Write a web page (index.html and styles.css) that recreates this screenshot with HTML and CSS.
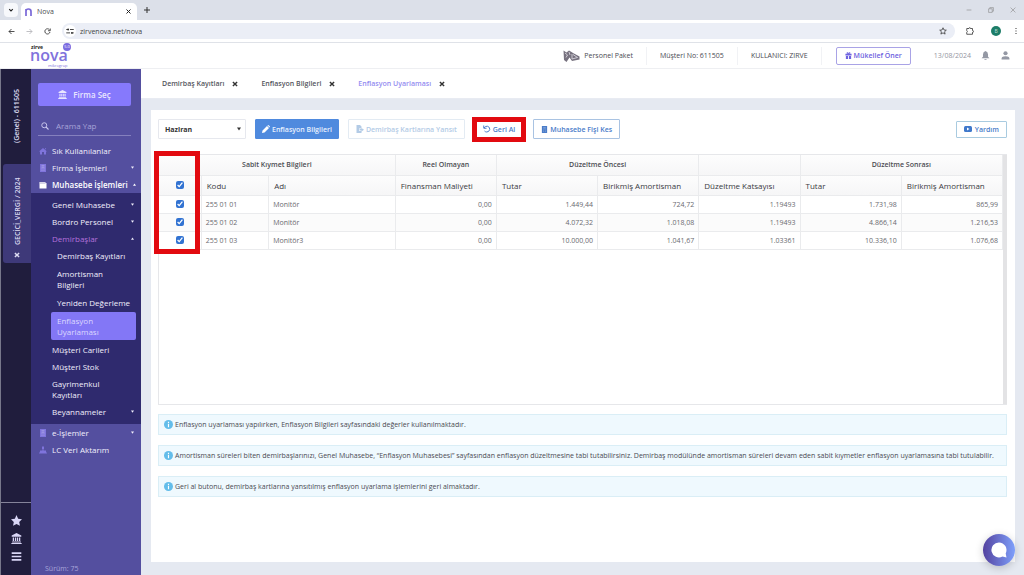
FILE: index.html
```html
<!DOCTYPE html>
<html lang="tr">
<head>
<meta charset="utf-8">
<title>Nova</title>
<link rel="stylesheet" href="styles.css">
</head>
<body>
<svg class="defs" aria-hidden="true">
  <symbol id="bank" viewBox="0 0 16 16"><path fill="currentColor" d="M8 0 15 3.6V5.4H1V3.6zM2.5 6.5h2v5h-2zM5.8 6.5h1.7v5H5.8zM8.6 6.5h1.7v5H8.600zM11.500 6.500h2v5h-2zM1.600 12.300h12.800v1.400H1.600zM.5 14.400h15V16H.5z"/></symbol>
  <symbol id="cross" viewBox="0 0 10 10"><path d="M1.500 1.500 8.500 8.500M8.500 1.500 1.500 8.500" stroke="currentColor" stroke-width="2.400" fill="none"/></symbol>
  <symbol id="down" viewBox="0 0 8 8"><path fill="currentColor" d="M0 1h8L4 7z"/></symbol>
  <symbol id="up" viewBox="0 0 8 8"><path fill="currentColor" d="M0 7h8L4 1z"/></symbol>
  <symbol id="info" viewBox="0 0 20 20"><circle cx="10" cy="10" r="10" fill="#63bdea"/><path d="M10 4v2.500M10 8.500V16" stroke="#fff" stroke-width="2.600"/></symbol>
  <symbol id="book" viewBox="0 0 16 16"><path fill="currentColor" d="M2 0h12v16H2z"/><path d="M5 3.500h6M5 6.500h6M5 9.500h2M9 9.500h2M5 12.500h2M9 12.500h2" stroke="#fff" stroke-opacity=".45" stroke-width="1.300"/></symbol>
</svg>

<header class="browser">
  <div class="tabstrip">
    <button class="tab-search" aria-label="Sekme ara"><svg viewBox="0 0 10 10"><path d="M2 3.500 5 6.500 8 3.500" fill="none" stroke="#222" stroke-width="1.800"/></svg></button>
    <div class="browser-tab">
      <svg class="favicon" viewBox="0 0 14 16"><path d="M2 16V2M2 6Q2 2 7 2t5 5v9" fill="none" stroke="#7a68d8" stroke-width="3.400"/></svg>
      <span class="grow">Nova</span>
      <button class="plain" aria-label="Kapat"><svg class="i5" viewBox="0 0 10 10"><path d="M1 1 9 9M9 1 1 9" stroke="#222" stroke-width="2"/></svg></button>
    </div>
    <button class="plain" aria-label="Yeni sekme"><svg class="i6" viewBox="0 0 10 10"><path d="M5 0V10M0 5H10" stroke="#333" stroke-width="1.700"/></svg></button>
    <div class="window-controls">
      <svg class="i6" viewBox="0 0 10 10"><path d="M1 5H9" stroke="#888"/></svg>
      <svg class="i6" viewBox="0 0 10 10"><path d="M1 3H7V9H1zM3 3V1H9V7H7" fill="none" stroke="#888"/></svg>
      <svg class="i6" viewBox="0 0 10 10"><path d="M1 1 9 9M9 1 1 9" stroke="#888"/></svg>
    </div>
  </div>
  <div class="toolbar">
    <button class="plain" aria-label="Geri"><svg class="i7" viewBox="0 0 14 14"><path d="M13 7H2M7 2 2 7 7 12" fill="none" stroke="#333" stroke-width="1.700"/></svg></button>
    <button class="plain" aria-label="İleri"><svg class="i7" viewBox="0 0 14 14"><path d="M1 7H12M7 2 12 7 7 12" fill="none" stroke="#b5b5b9" stroke-width="1.700"/></svg></button>
    <button class="plain" aria-label="Yenile"><svg class="i7" viewBox="0 0 14 14"><path d="M12 8A5.200 5.200 0 1 1 11 3.500M12.500 1V5.500H8" fill="none" stroke="#333" stroke-width="1.700"/></svg></button>
    <div class="address">
      <svg class="site" viewBox="0 0 16 16"><circle cx="8" cy="8" r="8" fill="#fff"/><path d="M3 6H5.500M8 6H13M3 10.500H8M10.500 10.500H13" stroke="#333" stroke-width="1.200"/><circle cx="5.500" cy="6" r="1.300" fill="#333"/><circle cx="10.500" cy="10.500" r="1.300" fill="#333"/></svg>
      <input class="url" aria-label="Adres" value="zirvenova.net/nova">
      <svg class="i8" viewBox="0 0 16 16"><path d="M8 1.500 10 6l4.600.4-3.500 3.100 1.100 4.700L8 11.700l-4.200 2.500 1.100-4.700L1.400 6.400 6 6z" fill="none" stroke="#333" stroke-width="1.500"/></svg>
    </div>
    <svg class="i8 ext" viewBox="0 0 16 16"><path d="M1.500 3H6Q6.500 .5 8 1.500 9 1.500 9 3H13V7Q15.500 7.500 15.500 9T13 10.500V14.500H1.500V10.500Q4 9 1.500 7.500z" fill="none" stroke="#333" stroke-width="1.600"/></svg>
    <span class="avatar">B</span>
    <svg class="i8" viewBox="0 0 16 16"><path d="M7 2h2v2H7zM7 7h2v2H7zM7 12h2v2H7z" fill="#333"/></svg>
  </div>
</header>

<div class="topbar">
  <a class="logo" href="#" aria-label="zirve nova"><span class="zirve">zirve</span><span class="nova">nova</span><span class="badge">5.0</span><span class="by">mikrogrup</span></a>
  <div class="account">
    <span class="paket"><svg viewBox="0 0 34 24"><path d="M1 1 7 5 12 1 17 4 20 6 33 13 33 19 18 22 13 15 7 24 2 20z" fill="#77727f"/><path d="M4 6 9 10 6 15M12 4 14 10M18 8 18 18 29 15 20 9" stroke="#e3e1e8" stroke-width="1.600" fill="none"/></svg>Personel Paket</span>
    <span class="musteri">Müşteri No: 611505</span>
    <span class="user">KULLANICI: ZIRVE</span>
    <span class="oner"><button class="oner-btn"><svg class="i7" viewBox="0 0 16 16"><path fill="currentColor" d="M1 4h14v4H1zM2 9h5v7H2zM9 9h5v7H9z"/><path d="M8 4Q3 4 4.500 1.500T8 4Q13 4 11.500 1.500T8 4" fill="none" stroke="currentColor" stroke-width="1.700"/></svg>Mükellef Öner</button></span>
    <span class="date">13/08/2024</span>
    <svg class="i9" viewBox="0 0 16 16"><path d="M8 0Q12.500 1.500 12.500 6V10L15 13H1L3.500 10V6Q3.500 1.500 8 0zM5.500 14H10.500Q8 17.500 5.500 14" fill="#9498a4"/></svg>
    <svg class="i9 person" viewBox="0 0 16 16"><circle cx="8" cy="4" r="3.700" fill="#9498a4"/><path d="M1 15Q0 9.500 8 9.500T15 15z" fill="#9498a4"/></svg>
  </div>
</div>

<div class="app">
  <aside class="rail">
    <button class="firm">(Genel) - 611505</button>
    <button class="firm current"><svg class="i6"><use href="#cross"/></svg>GECİCİ_VERGİ / 2024</button>
    <div class="rail-bottom">
      <svg viewBox="0 0 16 16"><path fill="#d9d6f6" d="M8 0 10.400 5.300 16 6 11.900 10 13 15.800 8 13 3 15.800 4.100 10 0 6 5.600 5.300z"/></svg>
      <svg><use href="#bank"/></svg>
      <svg viewBox="0 0 16 16"><path stroke="#d9d6f6" stroke-width="2.400" d="M1 3H15M1 8H15M1 13H15"/></svg>
    </div>
  </aside>

  <nav class="sidebar">
    <button class="firma-sec"><svg><use href="#bank"/></svg>Firma Seç</button>
    <label class="search"><svg viewBox="0 0 16 16"><circle cx="6.500" cy="6.500" r="5" fill="none" stroke="#cbc8ef" stroke-width="1.900"/><path d="M10 10 15 15" stroke="#cbc8ef" stroke-width="2.200"/></svg><input placeholder="Arama Yap" aria-label="Arama Yap"></label>
    <a class="item top" href="#"><svg class="mi" viewBox="0 0 16 16"><path fill="currentColor" d="M8 2 16 9H14V15H10V10H6V15H2V9H0zM12 2h2v4z"/></svg>Sık Kullanılanlar</a>
    <a class="item top" href="#"><svg class="mi"><use href="#book"/></svg>Firma İşlemleri<svg class="caret"><use href="#down"/></svg></a>
    <a class="item top open" href="#"><svg class="mi" viewBox="0 0 16 16"><path fill="currentColor" d="M1 2H13V4H15V15H1z"/><path d="M2 4H13" stroke="#544f9f"/></svg>Muhasebe İşlemleri<svg class="caret"><use href="#up"/></svg></a>
    <div class="submenu">
      <a class="item" href="#">Genel Muhasebe<svg class="caret"><use href="#down"/></svg></a>
      <a class="item" href="#">Bordro Personel<svg class="caret"><use href="#down"/></svg></a>
      <a class="item pink" href="#">Demirbaşlar<svg class="caret"><use href="#up"/></svg></a>
      <div class="leafs">
        <a class="leaf" href="#">Demirbaş Kayıtları</a>
        <a class="leaf" href="#">Amortisman<br>Bilgileri</a>
        <a class="leaf" href="#">Yeniden Değerleme</a>
        <a class="leaf active" href="#">Enflasyon<br>Uyarlaması</a>
      </div>
      <a class="item" href="#">Müşteri Carileri</a>
      <a class="item" href="#">Müşteri Stok</a>
      <a class="item" href="#">Gayrimenkul<br>Kayıtları</a>
      <a class="item" href="#">Beyannameler<svg class="caret"><use href="#down"/></svg></a>
    </div>
    <a class="item top" href="#"><svg class="mi"><use href="#book"/></svg>e-İşlemler<svg class="caret"><use href="#down"/></svg></a>
    <a class="item top" href="#"><svg class="mi" viewBox="0 0 16 16"><path fill="currentColor" d="M6 1H10V6H9V9H14V11L16 15H0L2 11V9H7V6H6z"/></svg>LC Veri Aktarım</a>
    <span class="version">Sürüm: 75</span>
  </nav>

  <main class="main">
    <div class="page-tabs">
      <span class="page-tab">Demirbaş Kayıtları<button class="plain" aria-label="Kapat"><svg class="i6"><use href="#cross"/></svg></button></span>
      <span class="page-tab">Enflasyon Bilgileri<button class="plain" aria-label="Kapat"><svg class="i6"><use href="#cross"/></svg></button></span>
      <span class="page-tab"><span class="violet">Enflasyon Uyarlaması</span><button class="plain" aria-label="Kapat"><svg class="i6"><use href="#cross"/></svg></button></span>
    </div>
    <div class="content">
      <section class="card">
        <div class="actions">
          <div class="month"><select aria-label="Dönem"><option>Haziran</option></select><svg class="caret"><use href="#down"/></svg></div>
          <button class="btn primary"><svg class="i8" viewBox="0 0 16 16"><path fill="#fff" d="M0 16 1 11 10 2 14 6 5 15zM11 1 12 0Q14 0 16 3L15 5z"/></svg>Enflasyon Bilgileri</button>
          <button class="btn faded" disabled><svg class="i8" viewBox="0 0 16 16"><path fill="currentColor" d="M1 0H8L11 3V7H6V12H11V16H1zM11 6 16 9.500 11 13V11H7V8H11z"/></svg>Demirbaş Kartlarına Yansıt</button>
          <span class="marked"><button class="btn undo"><svg class="i8" viewBox="0 0 16 16"><path d="M1.500 1V6.500H7M2 6Q5 1.500 9 2.500 14 4 13.500 9 12 14 7.500 14 5 14 3 12" fill="none" stroke="currentColor" stroke-width="2"/></svg>Geri Al</button></span>
          <button class="btn"><svg class="i7"><use href="#book"/></svg>Muhasebe Fişi Kes</button>
          <button class="btn help"><svg class="i8" viewBox="0 0 16 16"><rect y="2" width="16" height="12" rx="3" fill="#3f78cb"/><path d="M6 5 11 8 6 11z" fill="#fff"/></svg>Yardım</button>
        </div>
        <div class="grid-wrap">
          <div class="grid-body">
            <table class="grid">
              <colgroup><col class="c-check"><col class="c-code"><col class="c-name"><col class="c-num"><col class="c-num"><col class="c-num"><col class="c-num"><col class="c-num"><col class="c-num"></colgroup>
              <thead>
                <tr class="groups"><th colspan="3">Sabit Kıymet Bilgileri</th><th>Reel Olmayan</th><th colspan="2">Düzeltme Öncesi</th><th></th><th colspan="2">Düzeltme Sonrası</th></tr>
                <tr class="cols"><th class="check"><input type="checkbox" checked aria-label="Tümünü seç"></th><th>Kodu</th><th>Adı</th><th>Finansman Maliyeti</th><th>Tutar</th><th>Birikmiş Amortisman</th><th>Düzeltme Katsayısı</th><th>Tutar</th><th>Birikmiş Amortisman</th></tr>
              </thead>
              <tbody>
                <tr><td class="check"><input type="checkbox" checked aria-label="255 01 01"></td><td>255 01 01</td><td>Monitör</td><td class="num">0,00</td><td class="num">1.449,44</td><td class="num">724,72</td><td class="num">1.19493</td><td class="num">1.731,98</td><td class="num">865,99</td></tr>
                <tr><td class="check"><input type="checkbox" checked aria-label="255 01 02"></td><td>255 01 02</td><td>Monitör</td><td class="num">0,00</td><td class="num">4.072,32</td><td class="num">1.018,08</td><td class="num">1.19493</td><td class="num">4.866,14</td><td class="num">1.216,53</td></tr>
                <tr><td class="check"><input type="checkbox" checked aria-label="255 01 03"></td><td>255 01 03</td><td>Monitör3</td><td class="num">0,00</td><td class="num">10.000,00</td><td class="num">1.041,67</td><td class="num">1.03361</td><td class="num">10.336,10</td><td class="num">1.076,68</td></tr>
              </tbody>
            </table>
            <div class="mark"></div>
          </div>
          <div class="scrollbar"></div>
        </div>
        <div class="notes">
          <p class="note"><svg><use href="#info"/></svg>Enflasyon uyarlaması yapılırken, Enflasyon Bilgileri sayfasındaki değerler kullanılmaktadır.</p>
          <p class="note"><svg><use href="#info"/></svg>Amortisman süreleri biten demirbaşlarınızı, Genel Muhasebe, “Enflasyon Muhasebesi” sayfasından enflasyon düzeltmesine tabi tutabilirsiniz. Demirbaş modülünde amortisman süreleri devam eden sabit kıymetler enflasyon uyarlamasına tabi tutulabilir.</p>
          <p class="note"><svg><use href="#info"/></svg>Geri al butonu, demirbaş kartlarına yansıtılmış enflasyon uyarlama işlemlerini geri almaktadır.</p>
        </div>
      </section>
    </div>
  </main>
</div>
<button class="chat" aria-label="Canlı destek"><svg viewBox="0 0 16 16"><path fill="#fff" d="M8 .5A7.500 7.500 0 0 1 14.700 11.400L15.500 15.500 11.500 14.600A7.500 7.500 0 1 1 8 .5z"/></svg></button>
</body>
</html>
```
FILE: styles.css
```css
* { box-sizing: border-box; }
body { margin: 0; min-height: 100vh; display: flex; flex-direction: column; font: 7px/11px "Open Sans", "Noto Sans", sans-serif; color: #4a4a52; background: #fff; }
button, input, select { font: inherit; color: inherit; }
button { cursor: pointer; }
a { color: inherit; text-decoration: none; }
svg { flex: none; display: block; }
.defs { position: absolute; width: 0; height: 0; }
.plain { border: 0; padding: 0; background: none; }
.grow { flex: 1; }
.i5 { width: 5px; height: 5px; }
.i6 { width: 6px; height: 6px; }
.i7 { width: 7px; height: 7px; }
.i8 { width: 8px; height: 8px; }
.i9 { width: 9px; height: 9px; }

/* Browser frame */
.tabstrip { height: 20px; display: flex; align-items: center; gap: 7px; padding-left: 4px; background: #dce0e9; }
.tab-search { width: 14px; height: 14px; padding: 4px; border: 0; border-radius: 4px; background: #f7f8fb; }
.tab-search svg { width: 6px; height: 6px; }
.browser-tab { width: 116px; height: 17px; align-self: flex-end; margin-left: -4px; padding: 0 6px 0 4px; display: flex; align-items: center; gap: 5px; background: #fff; border-radius: 5px 5px 0 0; }
.favicon { width: 7px; height: 8px; }
.window-controls { display: flex; gap: 16px; margin: 0 8px 0 auto; }
.toolbar { height: 23px; display: flex; align-items: center; gap: 11px; padding: 0 4px 0 8px; border-bottom: 1px solid #dfe2e8; }
.address { flex: 1; height: 16px; display: flex; align-items: center; gap: 4px; padding: 0 8px 0 2px; border-radius: 8px; background: #ebeef6; }
.site { width: 12px; height: 12px; }
.url { flex: 1; min-width: 0; border: 0; padding: 0; background: none; color: #444; }
.ext { margin-right: 6px; }
.avatar { width: 10px; height: 10px; border-radius: 50%; background: #1d7d68; color: #b9ded5; font-size: 5px; line-height: 10px; text-align: center; }

/* Product header */
.topbar { height: 26px; display: flex; align-items: center; justify-content: space-between; border-bottom: 1px solid #eeeff2; }
.logo { position: relative; width: 44px; height: 26px; margin-left: 30px; color: #8072dc; }
.zirve, .nova, .badge, .by { position: absolute; }
.zirve { left: 1px; top: 1px; font: bold 5px/6px "Open Sans", sans-serif; color: #222; }
.nova { left: 0; top: 8px; font: 600 16px/9px "Open Sans", sans-serif; }
.badge { left: 33px; top: 0; width: 8px; height: 8px; border-radius: 50%; background: #7b6be0; color: #fff; font-size: 4px; line-height: 8px; text-align: center; }
.by { left: 18px; top: 20px; font-size: 4px; line-height: 5px; }
.account { display: flex; align-items: center; padding-right: 14px; }
.account > span { height: 18px; display: flex; align-items: center; }
.paket { gap: 4px; padding-right: 13px; border-right: 1px solid #f1f2f5; }
.paket svg { width: 17px; height: 12px; }
.musteri, .user { padding: 0 13px; border-right: 1px solid #f1f2f5; }
.oner { padding: 0 23px 0 14px; }
.oner-btn { height: 18px; display: flex; align-items: center; gap: 2px; padding: 0 8px; border: 1px solid #a9a3e6; border-radius: 2px; background: #fff; color: #6d62e0; font-weight: 600; }
.date { color: #94969f; margin-right: 10px; }
.person { margin-left: 11px; }

/* Application */
.app { flex: 1; display: flex; }
.rail { width: 31px; flex: none; display: flex; flex-direction: column; align-items: stretch; background: #201d3d; border-left: 1px solid #77778a; color: #dedcf3; }
.firm { writing-mode: vertical-rl; transform: rotate(180deg); height: 95px; border: 0; background: none; display: flex; align-items: center; justify-content: center; gap: 7px; padding: 0; font-weight: 600; }
.firm.current { height: 99px; margin-left: 2px; justify-content: flex-start; padding: 5px 0; background: #3e3979; border-radius: 0 3px 3px 0; }
.rail-bottom { margin-top: auto; height: 73px; border-top: 1px solid #85839a; display: flex; flex-direction: column; align-items: center; gap: 7px; padding-top: 12px; color: #d9d6f6; }
.rail-bottom svg { width: 11px; height: 11px; }
.sidebar { width: 110px; flex: none; display: flex; flex-direction: column; background: #544f9f; color: #f1effc; font-size: 8px; font-weight: 500; }
.firma-sec { height: 23px; margin: 14px 10px 0 7px; border: 0; border-radius: 2px; background: #8679fc; color: #e9e6ff; display: flex; align-items: center; justify-content: center; gap: 6px; font-weight: 600; }
.firma-sec svg { width: 9px; height: 9px; }
.search { margin: 10px 10px 6px 7px; height: 20px; display: flex; align-items: center; gap: 7px; padding-left: 3px; border-bottom: 1px solid #8580be; }
.search svg { width: 8px; height: 8px; }
.search input { flex: 1; min-width: 0; border: 0; padding: 0; background: none; font-weight: 400; }
.search input::placeholder { color: #a8a4d8; }
.item { display: flex; align-items: center; gap: 5px; padding: 3px 6px 3px 21px; white-space: nowrap; }
.item.top { padding-left: 8px; }
.mi { width: 8px; height: 8px; color: #7f74dc; }
.open { font-weight: 600; color: #fff; }
.open .mi { color: #fff; }
.caret { width: 4px; height: 4px; margin-left: auto; }
.sidebar .caret { width: 3px; height: 3px; margin-right: 1px; }
.submenu { background: #2f2a6e; padding: 3px 0 4px; }
.pink { color: #b571dc; }
.pink .caret { color: #eceafa; }
.leafs { display: flex; flex-direction: column; gap: 1px; padding-bottom: 1px; }
.leaf { margin: 0 5px 0 20px; padding: 3px 0 3px 6px; border-radius: 2px; white-space: nowrap; }
.active { background: #8377f6; color: #dcd8ff; }
.version { margin: auto 0 1px 14px; color: #a9a5da; font-size: 7px; font-weight: 400; }
.main { flex: 1; min-width: 0; display: flex; flex-direction: column; }
.page-tabs { height: 30px; display: flex; align-items: center; gap: 23px; padding-left: 21px; border-bottom: 1px solid #e8ebf2; }
.page-tab { display: flex; align-items: center; gap: 8px; color: #55555d; font-weight: 600; }
.page-tab button { color: #333; }
.violet { color: #948cf0; }
.content { flex: 1; display: flex; padding: 11px 9px 13px 10px; background: #e5e9f1; }
.card { flex: 1; min-width: 0; display: flex; flex-direction: column; background: #fff; padding: 9px 8px 0 7px; }
.actions { display: flex; align-items: center; gap: 9px; }
.month { position: relative; width: 88px; height: 20px; }
.month select { width: 100%; height: 20px; appearance: none; border: 1px solid #e6e8ee; border-radius: 1px; background: #fff; padding: 0 6px; font-weight: 700; color: #333; }
.month .caret { position: absolute; right: 5px; top: 8px; color: #333; }
.btn { height: 20px; display: flex; align-items: center; gap: 2px; padding: 0 7px; border: 1px solid #a9c3e2; border-radius: 1px; background: #fff; color: #4a7cc9; font-weight: 600; white-space: nowrap; }
.primary { padding: 0 6px; background: #4f8ade; border-color: #4f8ade; color: #e8f1ff; }
.faded { border-color: #e3ebf3; color: #b3cbe6; }
.marked { margin: -3px -2px; border: 5px solid #e20a10; }
.undo { height: 15px; padding: 0 6px; border: 0; }
.help { margin-left: auto; height: 17px; border-color: #a9cbe0; gap: 3px; }
.grid-wrap { height: 251px; margin-top: 15px; display: flex; border: 1px solid #e6e7ea; border-right: 0; }
.grid-body { position: relative; flex: 1; min-width: 0; }
.scrollbar { width: 4px; background: #e3e3e5; }
.grid { width: 100%; table-layout: fixed; border-collapse: collapse; }
.c-check { width: 5%; }
.c-code { width: 8%; }
.c-name { width: 15%; }
.c-num { width: 12%; }
.grid th, .grid td { padding: 0 5px; border-right: 1px solid #eaebed; border-bottom: 1px solid #eaebed; white-space: nowrap; }
.grid thead tr { height: 20px; background: linear-gradient(#fdfdfd, #f6f6f7); }
.grid th { font-weight: 600; color: #4c4c52; text-align: center; }
.grid .cols th { font-size: 8px; font-weight: 500; color: #3a3a3f; text-align: left; }
.grid tbody tr { height: 18px; }
.grid tbody tr:nth-child(even) { background: #fbfbfb; }
.grid td { color: #6a6a70; padding: 0 4px; }
.grid .num { text-align: right; }
.grid .check { text-align: center; padding: 0; }
.grid input { display: block; width: 8px; height: 8px; margin: 0 auto; accent-color: #3273d2; }
.mark { position: absolute; left: -5px; top: -4px; width: 46px; height: 103px; border: 5px solid #e20a10; pointer-events: none; }
.notes { display: flex; flex-direction: column; gap: 10px; margin-top: 9px; }
.note { margin: 0; min-height: 21px; display: flex; align-items: center; gap: 2px; padding: 0 5px; background: #eff9fe; border: 1px solid #daeef6; }
.note svg { width: 9px; height: 9px; }
.chat { position: fixed; right: 9px; bottom: 9px; width: 32px; height: 32px; padding: 8px; border: 0; border-radius: 50%; background: linear-gradient(90deg, #54429f, #7ea0fb); box-shadow: 0 2px 8px #0003; }
.chat svg { width: 16px; height: 16px; }
```
